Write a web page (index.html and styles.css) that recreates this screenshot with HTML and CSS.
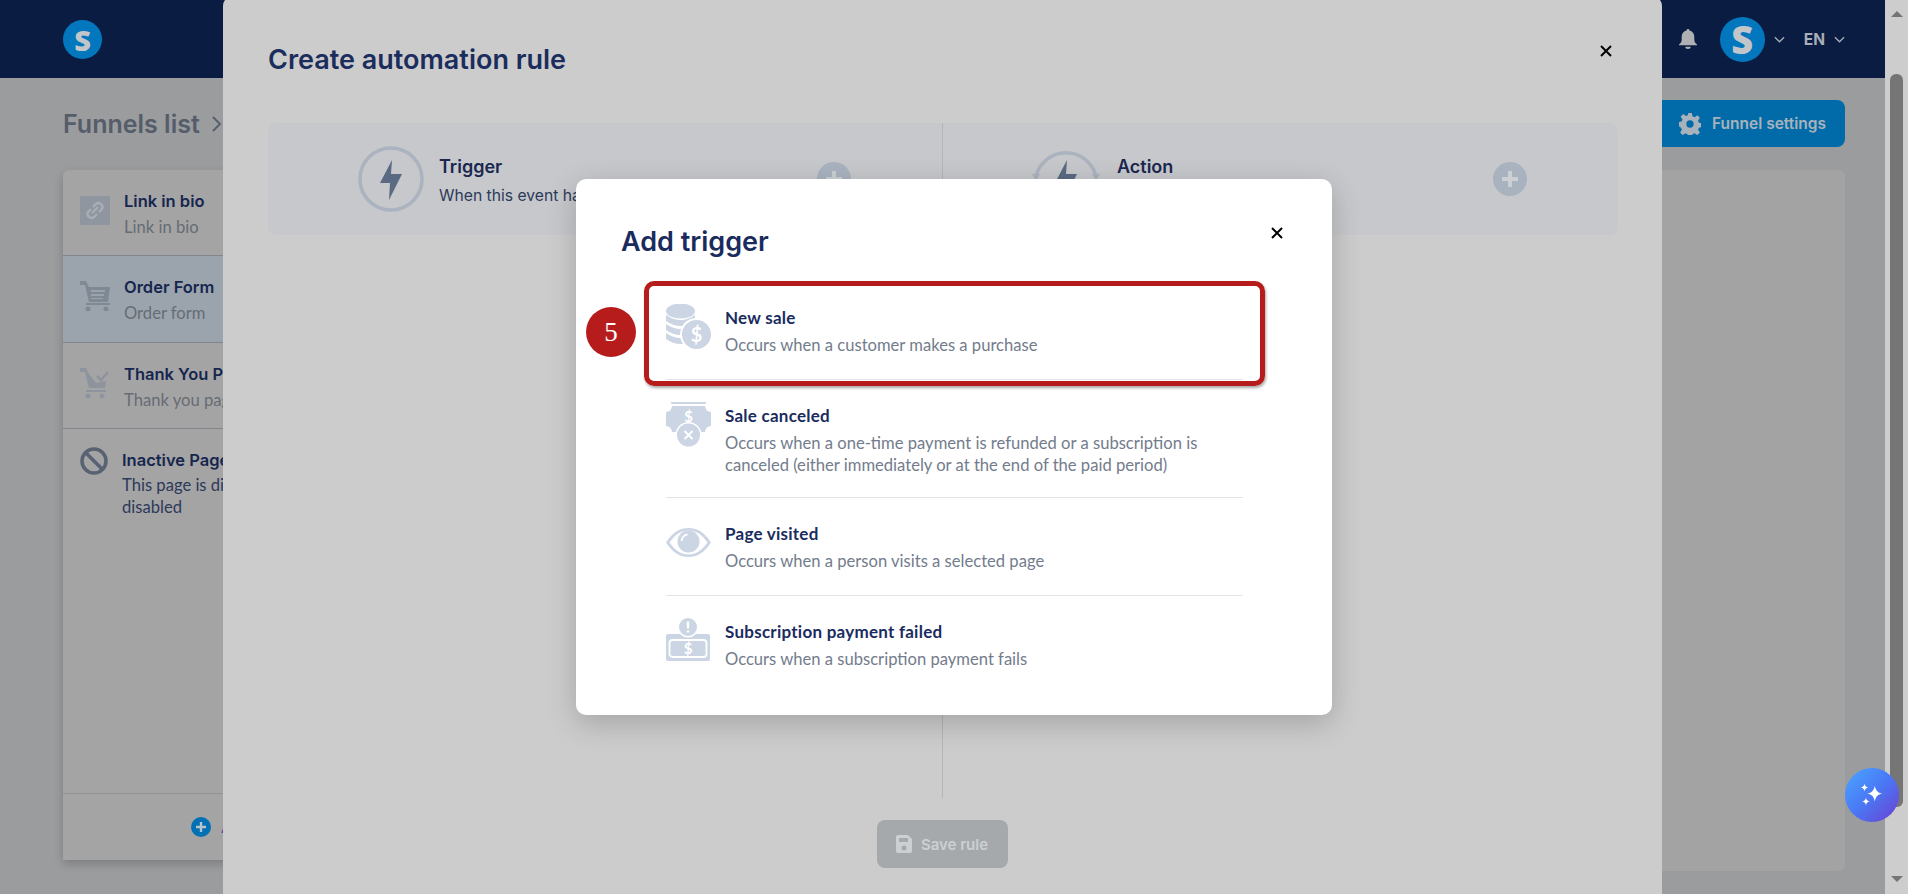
FILE: index.html
```html
<!DOCTYPE html>
<html lang="en">
<head>
  <meta charset="UTF-8" />
  <title>Add trigger</title>
  <link rel="stylesheet" href="styles.css">
</head>
<body>
  <div class="page">
    <header class="topbar">
      <div class="logo">S</div>
      <div class="topbarRight">
        <svg class="bell" viewBox="0 0 20 22"><path d="M10 0c-1 0-1.600.7-1.600 1.500C5 2.300 3 5 3 8.500V12c0 2-1.200 3.500-3 5v1h20v-1c-1.800-1.500-3-3-3-5V8.500c0-3.500-2-6.200-5.400-7C11.600.7 11 0 10 0zM7 19.500h6c0 1.500-1.300 2.500-3 2.500s-3-1-3-2.500z"/></svg>
        <div class="avatar">S</div>
        <svg class="chev" viewBox="0 0 12 7"><path d="M1 1l5 5 5-5"/></svg>
        <span class="lang">EN</span>
        <svg class="chev" viewBox="0 0 12 7"><path d="M1 1l5 5 5-5"/></svg>
      </div>
    </header>

    <div class="content">
      <div class="crumbRow">
        <h1>Funnels list</h1>
        <svg class="crumbArrow" viewBox="0 0 10 16"><path d="M1 1l7 7-7 7"/></svg>
        <button class="settingsBtn">
          <svg viewBox="0 0 24 24"><path d="M10 0h4l.7 3.500 2.300 1 3-2 2.800 2.800-2 3 1 2.300 3.500.7v4l-3.500.7-1 2.300 2 3-2.800 2.800-3-2-2.300 1-.7 3.500h-4l-.7-3.500-2.300-1-3 2-2.800-2.800 2-3-1-2.300L-.7 14v-4l3.500-.7 1-2.300-2-3L4.600 1.200l3 2 2.300-1zM12 8a4 4 0 100 8 4 4 0 000-8z"/></svg>
          Funnel settings
        </button>
      </div>

      <div class="panels">
        <aside class="funnelList">
          <div class="funnelRows">
            <div class="funnelRow">
              <svg class="funnelIcon" viewBox="0 0 30 30">
                <path fill="#8f969f" d="M0 1h30v29H0z"/>
                <path fill="none" stroke="#a9aeb4" stroke-width="2.400" d="M13 12l3-3a4 4 0 016 5l-3 3M17 19l-3 3a4 4 0 01-6-5l3-3M12 18l6-6"/>
              </svg>
              <div>
                <h3>Link in bio</h3>
                <p>Link in bio</p>
              </div>
            </div>
            <div class="funnelRow active">
              <svg class="funnelIcon" viewBox="0 0 30 30">
                <path fill="#7f8994" d="M0 0h6l3 6h21l-2 15H9L5 4H0zM11 9v2h14V9zm0 4v2h13v-2zm0 4v1h12v-1z"/>
                <circle cx="8" cy="28" r="2.500" fill="#7f8994"/><circle cx="26" cy="28" r="2.500" fill="#7f8994"/>
                <path fill="#7f8994" d="M6 22h24v2H6z"/>
              </svg>
              <div>
                <h3>Order Form</h3>
                <p>Order form</p>
              </div>
            </div>
            <div class="funnelRow">
              <svg class="funnelIcon" viewBox="0 0 30 30">
                <path fill="#8d949d" d="M0 0h6l3 6 7 9 10-2-1 7H9L5 4H0z"/>
                <path fill="none" stroke="#8d949d" stroke-width="2.500" d="M17 8l4 4 7-8"/>
                <circle cx="8" cy="28" r="2.500" fill="#8d949d"/><circle cx="22" cy="28" r="2.500" fill="#8d949d"/>
                <path fill="#8d949d" d="M6 22h20v2H6z"/>
              </svg>
              <div>
                <h3>Thank You Page</h3>
                <p>Thank you page</p>
              </div>
            </div>
            <div class="funnelRow inactive">
              <svg class="banIcon" viewBox="0 0 28 28"><circle cx="14" cy="14" r="12"/><path d="M5.500 5.500l17 17"/></svg>
              <div>
                <h3>Inactive Pages</h3>
                <p>This page is displayed when the funnel is disabled</p>
              </div>
            </div>
          </div>
          <div class="funnelFooter">
            <svg viewBox="0 0 20 20"><circle cx="10" cy="10" r="10" fill="#0270b4"/><path d="M10 5v10M5 10h10" stroke="#b8c4cc" stroke-width="2.400"/></svg>
            <span>Add page</span>
          </div>
        </aside>
        <section class="funnelCanvas"></section>
      </div>
    </div>
  </div>

  <div class="scrollbar">
    <span class="arrowUp"></span>
    <span class="thumb"></span>
    <span class="arrowDown"></span>
  </div>

  <!-- first dialog, dimmed behind the second one -->
  <div class="ruleModalWrap">
    <div class="ruleModal">
      <h2>Create automation rule</h2>
      <svg class="closeIcon ruleClose" viewBox="0 0 12 12"><path d="M1 1l10 10M11 1L1 11"/></svg>
      <div class="ruleGrid">
        <div class="ruleCol">
          <div class="ruleHead">
            <svg class="ruleCircle" viewBox="0 0 66 66">
              <circle cx="33" cy="33" r="31" fill="none" stroke="#aab3bf" stroke-width="3.500"/>
              <path fill="#5a6a82" d="M34 14L22 37h10l-1 17 13-26H33z"/>
            </svg>
            <div class="ruleText">
              <h4>Trigger</h4>
              <p>When this event happens</p>
            </div>
            <svg class="rulePlus" viewBox="0 0 34 34"><circle cx="17" cy="17" r="17" fill="#a9b3bf"/><path d="M17 9v16M9 17h16" stroke="#cdd0d3" stroke-width="4"/></svg>
          </div>
        </div>
        <div class="ruleCol">
          <div class="ruleHead">
            <svg class="ruleCircle" viewBox="0 0 66 66">
              <path fill="none" stroke="#aab3bf" stroke-width="3.500" d="M3 30a31 31 0 0160 0"/>
              <path fill="#aab3bf" d="M-1 28h8l-4 7zM59 28h8l-4 7z"/>
              <path fill="#5a6a82" d="M34 14L22 37h10l-1 17 13-26H33z"/>
            </svg>
            <div class="ruleText">
              <h4>Action</h4>
              <p>Do this action</p>
            </div>
            <svg class="rulePlus" viewBox="0 0 34 34"><circle cx="17" cy="17" r="17" fill="#a9b3bf"/><path d="M17 9v16M9 17h16" stroke="#cdd0d3" stroke-width="4"/></svg>
          </div>
        </div>
      </div>
      <div class="ruleActions">
        <button class="saveBtn">
          <svg viewBox="0 0 16 18"><path d="M2 0h10l4 4v12a2 2 0 01-2 2H2a2 2 0 01-2-2V2a2 2 0 012-2zm1 3v4h9V3zm5 7.500a2.500 2.500 0 100 5 2.500 2.500 0 000-5z"/></svg>
          Save rule
        </button>
      </div>
    </div>
  </div>

  <!-- second dialog -->
  <div class="triggerModalWrap">
    <div class="triggerModal">
      <h2>Add trigger</h2>
      <svg class="closeIcon triggerClose" viewBox="0 0 12 12"><path d="M1 1l10 10M11 1L1 11"/></svg>

      <div class="triggerRow">
        <svg class="triggerIcon" viewBox="0 0 45 45">
          <ellipse class="fillIcon" cx="14.500" cy="7" rx="14.500" ry="7.500"/>
          <path class="fillIcon" d="M0 11q14.500 10 29 0v6q-14.500 10-29 0zM0 20q14.500 10 29 0v6q-14.500 10-29 0zM0 29q14.500 10 29 0v6q-14.500 10-29 0z"/>
          <circle cx="30.500" cy="30.500" r="16.500" fill="#fff"/>
          <circle class="fillIcon" cx="30.500" cy="30.500" r="14.500"/>
          <text class="iconGlyph" x="30.500" y="37.500" font-size="20">$</text>
        </svg>
        <div class="triggerText">
          <h3>New sale</h3>
          <p>Occurs when a customer makes a purchase</p>
        </div>
      </div>

      <div class="triggerRow">
        <svg class="triggerIcon" viewBox="0 0 45 45">
          <path class="fillIcon" d="M2 0h41v2H2zM0 4h45v26H0z"/>
          <circle cx="0" cy="4" r="6" fill="#fff"/><circle cx="45" cy="4" r="6" fill="#fff"/>
          <circle cx="0" cy="30" r="6" fill="#fff"/><circle cx="45" cy="30" r="6" fill="#fff"/>
          <text class="iconGlyph" x="22.500" y="20" font-size="15">$</text>
          <circle cx="22.500" cy="33" r="13" fill="#fff"/>
          <circle class="fillIcon" cx="22.500" cy="33" r="11.500"/>
          <path d="M18.500 29l8 8M26.500 29l-8 8" stroke="#fff" stroke-width="2"/>
        </svg>
        <div class="triggerText">
          <h3>Sale canceled</h3>
          <p>Occurs when a one-time payment is refunded or a subscription is canceled (either immediately or at the end of the paid period)</p>
        </div>
      </div>

      <div class="triggerRow">
        <svg class="triggerIcon" viewBox="0 0 45 45">
          <path class="fillIcon" d="M0 22.500C7 12 14 8 22.500 8S38 12 45 22.500C38 33 31 37 22.500 37S7 33 0 22.500z"/>
          <path fill="#fff" d="M3.500 22.500C9 14.500 15 10.500 22.500 10.500s13.500 4 19 12c-5.500 8-11.500 12-19 12s-13.500-4-19-12z"/>
          <circle class="fillIcon" cx="22.500" cy="21.500" r="11"/>
          <path d="M15.500 21a7 7 0 016-6.500" fill="none" stroke="#fff" stroke-width="2"/>
        </svg>
        <div class="triggerText">
          <h3>Page visited</h3>
          <p>Occurs when a person visits a selected page</p>
        </div>
      </div>

      <div class="triggerRow lastRow">
        <svg class="triggerIcon" viewBox="0 0 45 45">
          <rect class="fillIcon" x="0" y="16" width="44" height="27" rx="2"/>
          <rect x="3.500" y="22" width="37" height="17" rx="3" fill="none" stroke="#fff" stroke-width="1.800"/>
          <circle cx="22" cy="9" r="10.500" fill="#fff"/>
          <circle class="fillIcon" cx="22" cy="9" r="9"/>
          <path d="M22 3.500v7M22 12.500v2" stroke="#fff" stroke-width="2.400"/>
          <text class="iconGlyph" x="22" y="36" font-size="15">$</text>
        </svg>
        <div class="triggerText">
          <h3>Subscription payment failed</h3>
          <p>Occurs when a subscription payment fails</p>
        </div>
      </div>

      <!-- step marker drawn on top of the dialog -->
      <div class="stepHighlight"></div>
      <div class="stepBadge">5</div>
    </div>
  </div>

  <button class="aiBubble">
    <svg viewBox="0 0 30 30" fill="#fff">
      <path d="M18 5c1 5 3 7.500 8 8.500-5 1-7 3.500-8 8.500-1-5-3-7.500-8-8.500 5-1 7-3.500 8-8.500z"/>
      <path d="M7 3c.5 2.500 1.500 3.500 4 4-2.500.5-3.500 1.500-4 4-.5-2.500-1.500-3.500-4-4 2.500-.5 3.500-1.500 4-4z"/>
      <path d="M8.500 18c.5 2.500 1.500 3.500 4 4-2.500.5-3.500 1.500-4 4-.5-2.500-1.500-3.500-4-4 2.500-.5 3.500-1.500 4-4z"/>
    </svg>
  </button>
</body>
</html>
```

FILE: styles.css
```css
* {
  box-sizing: border-box;
  margin: 0;
  padding: 0;
}

/* colours are the dimmed values, as seen under the two dialog backdrops */
body {
  font-family: "Inter", "Liberation Sans", sans-serif;
  background-color: #9b9c9e;
  height: 100vh;
  overflow: hidden;
  display: flex;
}

.page {
  flex: 1;
  display: flex;
  flex-direction: column;
  min-width: 0;
}

.topbar {
  height: 78px;
  background-color: #0a1c42;
  display: flex;
  align-items: center;
  justify-content: space-between;
  padding: 0 40px 0 63px;
}

.logo, .avatar {
  display: flex;
  align-items: center;
  justify-content: center;
  background-color: #0277bd;
  border-radius: 50%;
  color: #c2c6c9;
  font-family: "Open Sans", sans-serif;
  font-weight: 800;
}

.logo {
  width: 39px;
  height: 39px;
  font-size: 29px;
}

.topbarRight {
  display: flex;
  align-items: center;
}

.bell {
  width: 18px;
  height: 20px;
  fill: #aeb0b3;
  margin-right: 23px;
}

.avatar {
  width: 45px;
  height: 45px;
  font-size: 38px;
}

.chev {
  width: 11px;
  height: 7px;
  fill: none;
  stroke: #a8aeb8;
  stroke-width: 1.400;
  margin-left: 9px;
}

.lang {
  color: #a8aeb8;
  font-size: 15.500px;
  font-weight: 700;
  margin-left: 19px;
}

.lang + .chev {
  margin-left: 9px;
}

.content {
  flex: 1;
  padding: 22px 40px 0 63px;
  min-height: 0;
}

.crumbRow {
  display: flex;
  align-items: center;
  height: 47px;
  margin-bottom: 23px;
}

h1 {
  font-size: 25px;
  font-weight: 600;
  color: #555d6b;
}

.crumbArrow {
  width: 10px;
  height: 16px;
  fill: none;
  stroke: #555d6b;
  stroke-width: 1.800;
  margin-left: 12px;
}

.settingsBtn {
  margin-left: auto;
  height: 47px;
  width: 200px;
  border: none;
  border-radius: 8px;
  background-color: #016aa9;
  color: #a8b2ba;
  font-family: inherit;
  font-size: 15.500px;
  font-weight: 600;
  display: flex;
  align-items: center;
  gap: 11px;
  padding: 0 0 0 34px;
}

.settingsBtn svg {
  width: 22px;
  height: 22px;
  fill: #a8b2ba;
}

.panels {
  display: flex;
  align-items: flex-start;
  gap: 24px;
}

.funnelList {
  width: 420px;
  height: 690px;
  background-color: #a4a4a4;
  border-radius: 6px 6px 0 0;
  box-shadow: 0 4px 10px rgba(0, 0, 0, 0.2);
  display: flex;
  flex-direction: column;
}

.funnelRows {
  flex: 1;
}

.funnelRow {
  display: flex;
  gap: 14px;
  height: 86px;
  padding: 25px 17px 0;
  border-bottom: 1px solid #80868c;
}

.funnelRow.active {
  background-color: #9ba4ac;
  height: 87px;
}

.funnelRow.inactive {
  border-bottom: none;
  padding-top: 18px;
}

.funnelIcon {
  width: 30px;
  height: 30px;
  flex-shrink: 0;
}

.banIcon {
  width: 28px;
  height: 28px;
  flex-shrink: 0;
  fill: none;
  stroke: #596273;
  stroke-width: 3.500;
}

.funnelRow h3 {
  font-size: 16.500px;
  font-weight: 600;
  line-height: 20px;
  color: #16264f;
  margin-top: -4px;
  margin-bottom: 5px;
}

.funnelRow p {
  font-family: "Lato", sans-serif;
  font-size: 16.600px;
  line-height: 22px;
  color: #666c74;
}

.funnelRow.inactive h3 {
  margin-top: 3px;
  margin-bottom: 4px;
}

.funnelRow.inactive p {
  color: #2c3a5a;
  max-width: 340px;
}

.funnelFooter {
  height: 67px;
  border-top: 1px solid #92938f;
  display: flex;
  align-items: center;
  padding-left: 128px;
  gap: 10px;
  font-weight: 600;
  font-size: 15px;
  color: #5a3f9c;
}

.funnelFooter svg {
  width: 20px;
  height: 20px;
}

.funnelCanvas {
  flex: 1;
  height: 701px;
  background-color: #a3a3a3;
  border-radius: 6px;
}

.scrollbar {
  width: 23px;
  background-color: #cdcdcd;
  display: flex;
  flex-direction: column;
  align-items: center;
  position: relative;
}

.arrowUp, .arrowDown {
  position: absolute;
  width: 0;
  height: 0;
  border-left: 6px solid transparent;
  border-right: 6px solid transparent;
}

.arrowUp {
  top: 11px;
  border-bottom: 6px solid #757575;
}

.arrowDown {
  top: 876px;
  border-top: 6px solid #757575;
}

.thumb {
  position: absolute;
  top: 74px;
  width: 13px;
  height: 733px;
  background-color: #757575;
  border-radius: 6px;
}

.ruleModalWrap {
  position: absolute;
  top: 0;
  left: 0;
  width: 1885px;
  height: 894px;
  overflow: hidden;
  display: flex;
  justify-content: center;
}

.ruleModal {
  position: relative;
  width: 1439px;
  height: 1000px;
  margin-top: -4px;
  background-color: #cccccc;
  border-radius: 10px;
  padding: 46px 44px 0 45px;
}

.ruleModal h2 {
  font-size: 27px;
  font-weight: 600;
  line-height: 36px;
  color: #1b2d5c;
  margin-bottom: 45px;
}

.closeIcon {
  position: absolute;
  width: 12px;
  height: 12px;
  fill: none;
  stroke: #000;
  stroke-width: 2;
}

.ruleClose {
  top: 49px;
  right: 50px;
}

.ruleGrid {
  display: grid;
  grid-template-columns: 1fr 1fr;
}

.ruleCol {
  height: 675px;
}

.ruleCol:first-child {
  border-right: 1px solid #b4b5b6;
}

.ruleHead {
  height: 112px;
  background-color: #c6c8cb;
  display: flex;
  align-items: center;
  padding: 0 91px 0 90px;
}

.ruleCol:first-child .ruleHead {
  border-radius: 8px 0 0 8px;
}

.ruleCol:last-child .ruleHead {
  border-radius: 0 8px 8px 0;
}

.ruleCol:last-child .ruleText {
  margin-left: 18px;
}

.ruleCircle {
  width: 66px;
  height: 66px;
  flex-shrink: 0;
  overflow: visible;
}

.ruleText {
  margin-left: 15px;
  padding-top: 4px;
}

.ruleText h4 {
  font-size: 18px;
  font-weight: 600;
  line-height: 22px;
  color: #1a2750;
  margin-bottom: 7px;
}

.ruleText p {
  font-size: 15.700px;
  line-height: 22px;
  color: #2c3a5a;
}

.rulePlus {
  width: 34px;
  height: 34px;
  margin-left: auto;
}

.ruleActions {
  display: flex;
  justify-content: center;
  margin-top: 22px;
  padding-right: 2px;
}

.saveBtn {
  width: 131px;
  height: 48px;
  border: none;
  border-radius: 8px;
  background-color: #a5a9ac;
  color: #ccd0d2;
  font-family: inherit;
  font-size: 15px;
  font-weight: 600;
  display: flex;
  align-items: center;
  justify-content: center;
  gap: 9px;
}

.saveBtn svg {
  width: 16px;
  height: 18px;
  fill: #ccd0d2;
}

.triggerModalWrap {
  position: absolute;
  top: 0;
  left: 0;
  width: 100%;
  height: 100%;
  display: flex;
  justify-content: center;
  padding-top: 179px;
}

.triggerModal {
  position: relative;
  width: 756px;
  height: 536px;
  background-color: #fff;
  border-radius: 10px;
  box-shadow: 0 8px 30px rgba(0, 0, 0, 0.2);
  padding: 46px 89px 0 90px;
}

.triggerModal h2 {
  font-size: 27px;
  font-weight: 600;
  line-height: 34px;
  color: #1a2c5e;
  margin-left: -45px;
  margin-bottom: 23px;
}

.triggerClose {
  top: 48px;
  right: 49px;
}

.triggerRow {
  display: flex;
  gap: 14px;
  min-height: 98px;
  padding: 22px 0 21px;
  border-bottom: 1px solid #e4e4e4;
}

.triggerRow.lastRow {
  border-bottom: none;
}

.triggerIcon {
  width: 45px;
  height: 45px;
  flex-shrink: 0;
}

.fillIcon {
  fill: #cbd5e3;
}

.iconGlyph {
  fill: #fff;
  font-family: "Lato", sans-serif;
  font-weight: 700;
  text-anchor: middle;
}

.triggerText {
  padding-top: 3px;
}

.triggerText h3 {
  font-family: "Lato", sans-serif;
  font-size: 17px;
  font-weight: 700;
  letter-spacing: 0.25px;
  line-height: 22px;
  color: #1a2c5e;
  margin-bottom: 5px;
}

.triggerText p {
  font-family: "Lato", sans-serif;
  font-size: 16.600px;
  line-height: 22px;
  color: #737c8c;
}

.stepHighlight {
  position: absolute;
  left: 68px;
  top: 102px;
  width: 621px;
  height: 105px;
  border: 5px solid #b71c1c;
  border-radius: 10px;
  box-shadow: 1px 2px 3px rgba(0, 0, 0, 0.35);
}

.stepBadge {
  position: absolute;
  left: 10px;
  top: 128px;
  width: 50px;
  height: 50px;
  border-radius: 50%;
  background-color: #b71c1c;
  color: #fff;
  font-family: "Liberation Serif", serif;
  font-size: 27px;
  display: flex;
  align-items: center;
  justify-content: center;
}

.aiBubble {
  position: absolute;
  left: 1845px;
  top: 768px;
  width: 54px;
  height: 54px;
  border: none;
  border-radius: 50%;
  background: linear-gradient(135deg, #4aa6ff, #4a78f5 50%, #6c3fd0);
  display: flex;
  align-items: center;
  justify-content: center;
}

.aiBubble svg {
  width: 28px;
  height: 28px;
}
```
